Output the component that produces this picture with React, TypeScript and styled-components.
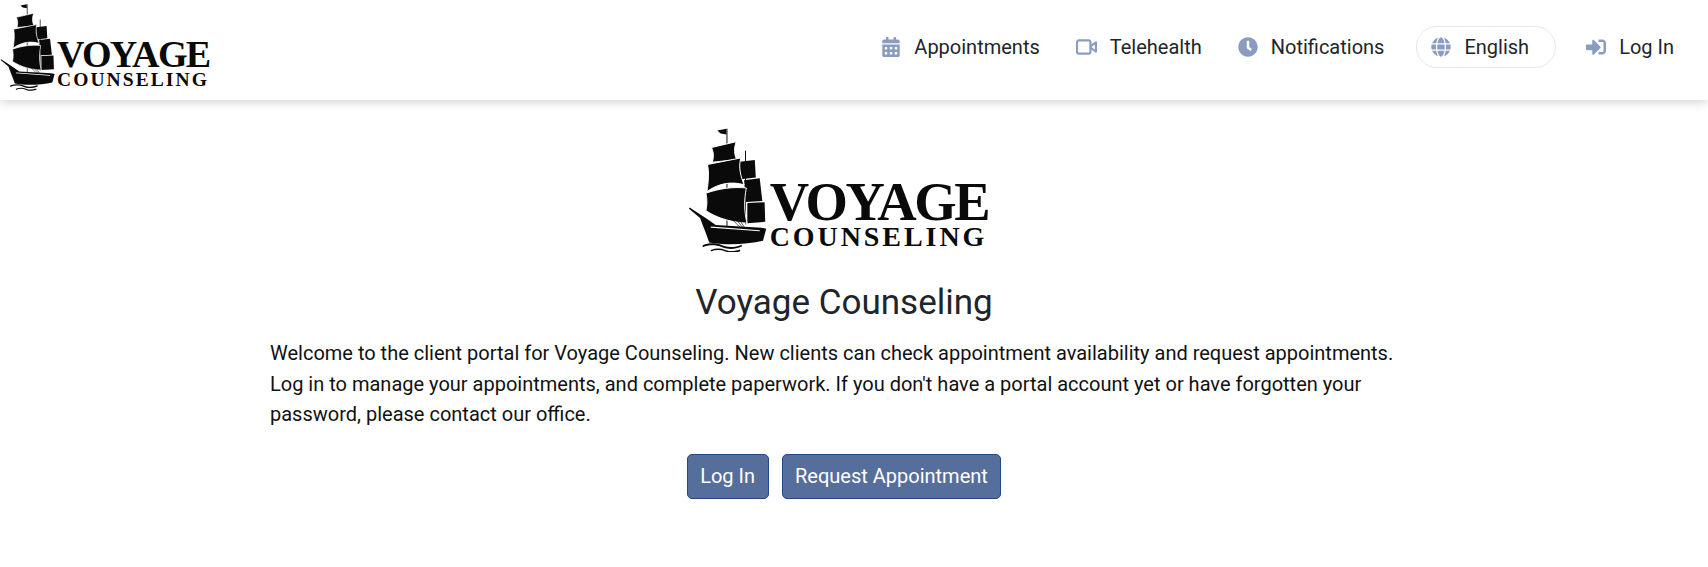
import React from 'react';
import styled, { createGlobalStyle } from 'styled-components';
import { FaCalendarAlt, FaClock, FaGlobe, FaSignInAlt } from 'react-icons/fa';

const GlobalStyle = createGlobalStyle`
  html, body {
    margin: 0;
    padding: 0;
    background: #fff;
    font-family: Roboto, "Liberation Sans", sans-serif;
    color: #212529;
    overflow: hidden;
  }
`;

const Header = styled.header`
  display: flex;
  align-items: center;
  justify-content: space-between;
  box-sizing: border-box;
  height: 100px;
  padding-bottom: 6px;
  box-shadow: 0 2px 10px rgba(0, 0, 0, 0.18);
`;

const Nav = styled.nav`
  display: flex;
  align-items: center;
  gap: 36px;
  padding-right: 34px;
`;

const NavItem = styled.a<{ $pill?: boolean }>`
  display: flex;
  align-items: center;
  gap: 13px;
  font-size: 20px;
  color: #212529;
  height: 40px;
  ${(p) =>
    p.$pill &&
    `
    border: 1px solid #e4e8f1;
    border-radius: 21px;
    padding: 0 26px 0 14px;
    margin: 0 -6px 0 -4px;
  `}
  svg {
    width: 20px;
    height: 20px;
    color: #8a9dc1;
    flex: none;
  }
`;

const VideoGlyph = styled.svg`
  && {
    width: 21px;
    height: 18px;
  }
`;

const Logo = styled.div<{ $width: number }>`
  display: flex;
  align-items: flex-end;
  gap: 0.006em;
  box-sizing: border-box;
  width: ${(p) => p.$width * 1.047}px;
  font-size: ${(p) => p.$width}px;
  color: #0a0a0a;

  svg {
    width: 0.268em;
    flex: none;
    display: block;
  }
`;

const Wordmark = styled.div`
  display: flex;
  flex-direction: column;
  font-family: "Liberation Serif", serif;
  font-weight: 700;
  line-height: 1;
  margin-bottom: 0.005em;
  white-space: nowrap;
`;

const WordmarkTop = styled.span`
  font-size: 0.183em;
  letter-spacing: -0.045em;
  line-height: 0.84;
`;

const WordmarkBottom = styled.span`
  font-size: 0.094em;
  letter-spacing: 0.105em;
  line-height: 0.95;
`;

const Main = styled.main`
  display: flex;
  flex-direction: column;
  align-items: center;
  padding: 27px 20px 0 0;
`;

const Title = styled.h1`
  margin: 29px 0 0;
  font-size: 35px;
  font-weight: 400;
  line-height: 44px;
  color: #212529;
`;

const Intro = styled.p`
  width: 1148px;
  margin: 13px 0 0;
  font-size: 20px;
  line-height: 30.5px;
  color: #111;
`;

const Actions = styled.div`
  display: flex;
  gap: 13px;
  margin-top: 24px;
`;

const Button = styled.button`
  height: 45px;
  padding: 0 12.5px;
  font: 400 20px Roboto, "Liberation Sans", sans-serif;
  color: #fff;
  background: #566e9b;
  border: 1px solid #234780;
  border-radius: 5px;
`;

const VideoIcon = () => (
  <VideoGlyph viewBox="0 0 22 18" fill="none" stroke="currentColor" strokeWidth="2.2">
    <rect x="1.1" y="2.1" width="14" height="13.8" rx="2" />
    <path d="M15.5 8l5.4-4v10l-5.4-4z" strokeLinejoin="round" />
  </VideoGlyph>
);

const Ship = () => (
  <svg viewBox="50 35 245 385" fill="currentColor">
    <path d="M168 40v300h3V40zM225 108v225h3V108z" />
    <path d="M140 46l28-6v18l-18-3z" />
    <path d="M208 142l47-6 3 54-46 5zM222 198l48-6 8 70-50 3zM232 268l53-2 2 60-55 4z" />
    <g stroke="#fff" strokeWidth="3">
      <path d="M122 98l76-18c-8 20-6 42 2 55l-75 8c5-20 3-32-3-45z" />
      <path d="M110 150l102-20c-8 28 0 58 10 82-38-10-75-6-114 21 5-30 7-60 2-83z" />
      <path d="M105 238c40-14 82-20 124-16-7 35-7 72 2 108-45-3-85-12-126-38 4-20 4-35 0-54z" />
    </g>
    <path d="M175 308l38 38M186 304l34 42M197 302l28 44" stroke="currentColor" strokeWidth="2" fill="none" />
    <path d="M55 282l55 36 25 18 140 8 15 3-10 37c-50 12-120 14-165 5-8-25-18-48-28-75L53 286z" />
    <path d="M95 398c20-8 40-8 60 0s40 6 60-2v6c-20 8-40 10-60 2s-40-8-60 0zM120 412c15-6 30-6 45 0s30 4 45-1v5c-15 5-30 7-45 1s-30-6-45 0z" />
    <path d="M120 340l150 12v3l-150-11z" fill="#fff" />
  </svg>
);

const BrandLogo = ({ width }: { width: number }) => (
  <Logo $width={width}>
    <Ship />
    <Wordmark>
      <WordmarkTop>VOYAGE</WordmarkTop>
      <WordmarkBottom>COUNSELING</WordmarkBottom>
    </Wordmark>
  </Logo>
);

export default function App() {
  return (
    <>
      <GlobalStyle />
      <Header>
        <BrandLogo width={208} />
        <Nav>
          <NavItem><FaCalendarAlt />Appointments</NavItem>
          <NavItem><VideoIcon />Telehealth</NavItem>
          <NavItem><FaClock />Notifications</NavItem>
          <NavItem $pill><FaGlobe />English</NavItem>
          <NavItem><FaSignInAlt />Log In</NavItem>
        </Nav>
      </Header>
      <Main>
        <BrandLogo width={298} />
        <Title>Voyage Counseling</Title>
        <Intro>
          Welcome to the client portal for Voyage Counseling. New clients can check appointment
          availability and request appointments. Log in to manage your appointments, and complete
          paperwork. If you don't have a portal account yet or have forgotten your password, please
          contact our office.
        </Intro>
        <Actions>
          <Button>Log In</Button>
          <Button>Request Appointment</Button>
        </Actions>
      </Main>
    </>
  );
}
